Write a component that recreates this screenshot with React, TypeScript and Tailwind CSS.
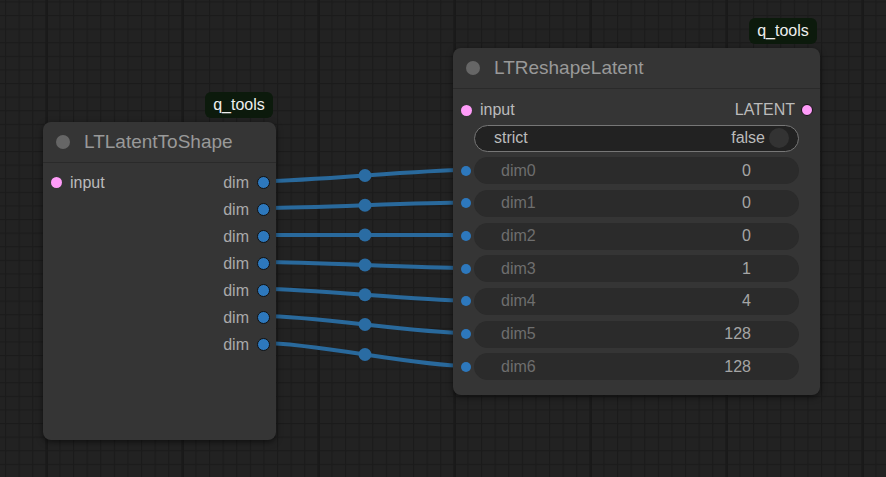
import React from 'react';

const FONT = "font-['Liberation_Sans',Arial,sans-serif]";

// link endpoints: output slot of LTLatentToShape -> input slot of LTReshapeLatent
const links = [
  [181, 170],
  [208, 202.5],
  [235, 235],
  [262, 268],
  [289, 300.5],
  [316, 333],
  [343, 366],
];

const dims = [
  { name: 'dim0', value: '0' },
  { name: 'dim1', value: '0' },
  { name: 'dim2', value: '0' },
  { name: 'dim3', value: '1' },
  { name: 'dim4', value: '4' },
  { name: 'dim5', value: '128' },
  { name: 'dim6', value: '128' },
];

const Badge: React.FC = () => (
  <div className="absolute bottom-full right-[3px] mb-[4px] h-[26px] w-[68px] rounded-[6px] bg-[#0c1a0c] flex items-center justify-center text-[16px] text-[#eeeeee]">
    q_tools
  </div>
);

const Title: React.FC<{ text: string }> = ({ text }) => (
  <div className="h-[41px] flex items-center border-b border-[#2a2a2a]">
    <span className="ml-[13px] w-[14px] h-[14px] rounded-full bg-[#666666]" />
    <span className="ml-[14px] pt-[1px] text-[19px] text-[#999999]">{text}</span>
  </div>
);

const GridAndLinks: React.FC = () => (
  <svg className="absolute inset-0" width={886} height={477}>
    <defs>
      <pattern id="minor" width="13.6" height="13.6" patternUnits="userSpaceOnUse" x="5" y="1.4">
        <rect width="13.6" height="13.6" fill="#222222" />
        <path d="M0 0.5H13.6M0.5 0V13.6" stroke="#1b1b1b" strokeWidth="1.4" />
      </pattern>
    </defs>
    <rect width="886" height="477" fill="#222222" />
    <rect width="886" height="477" fill="url(#minor)" />
    <path d="M46.7 0V477M182.7 0V477M318.7 0V477M454.7 0V477M590.7 0V477M726.7 0V477M862.7 0V477" stroke="#1a1a1a" strokeWidth="2.5" />
    {links.map(([y1, y2], i) => {
      const x1 = 264;
      const x2 = 466;
      const d = `M${x1} ${y1} C${x1 + 50} ${y1} ${x2 - 50} ${y2} ${x2} ${y2}`;
      return (
        <g key={i}>
          <path d={d} fill="none" stroke="#29699c" strokeWidth="4" />
          <circle cx={365} cy={(y1 + y2) / 2} r={6.5} fill="#2a6ca3" />
        </g>
      );
    })}
  </svg>
);

const LatentToShape: React.FC = () => (
  <div className="absolute left-[43px] top-[122px] w-[233px] h-[318px] rounded-[8px] bg-[#353535] shadow-[0_2px_6px_rgba(0,0,0,0.55)]">
    <Badge />
    <Title text="LTLatentToShape" />
    <div className="flex justify-between pt-[6px]">
      <div className="flex flex-col">
        <div className="h-[27px] flex items-center">
          <span className="ml-[8px] w-[11px] h-[11px] rounded-full bg-[#ff9cf9]" />
          <span className="ml-[8px] text-[16px] text-[#bbbbbb]">input</span>
        </div>
      </div>
      <div className="flex flex-col">
        {links.map((_, i) => (
          <div key={i} className="h-[27px] flex items-center justify-end">
            <span className="text-[16px] text-[#aaaaaa]">dim</span>
            <span className="ml-[8px] mr-[6px] w-[13px] h-[13px] rounded-full bg-[#2d78bd] border-[1.5px] border-[#111111]" />
          </div>
        ))}
      </div>
    </div>
  </div>
);

const ReshapeLatent: React.FC = () => (
  <div className="absolute left-[453px] top-[48px] w-[367px] h-[347px] rounded-[8px] bg-[#353535] shadow-[0_2px_6px_rgba(0,0,0,0.55)]">
    <Badge />
    <Title text="LTReshapeLatent" />
    <div className="pt-[8px] h-[34px] flex items-center justify-between">
      <div className="flex items-center">
        <span className="ml-[8px] w-[11px] h-[11px] rounded-full bg-[#ff9cf9]" />
        <span className="ml-[8px] text-[16px] text-[#bbbbbb]">input</span>
      </div>
      <div className="flex items-center">
        <span className="text-[16px] text-[#bbbbbb]">LATENT</span>
        <span className="ml-[6px] mr-[7px] w-[12px] h-[12px] rounded-full bg-[#ff9cf9] border-[1.5px] border-[#111111]" />
      </div>
    </div>
    <div className="flex flex-col gap-[5.7px] mt-[1.5px]">
      <div className="mx-[21px] h-[27px] rounded-full bg-[#222222] border border-[#777777] flex items-center justify-between">
        <span className="ml-[19px] text-[16px] text-[#bbbbbb]">strict</span>
        <div className="flex items-center">
          <span className="text-[16px] text-[#bbbbbb]">false</span>
          <span className="ml-[4px] mr-[9px] w-[20px] h-[20px] rounded-full bg-[#333333]" />
        </div>
      </div>
      {dims.map((d) => (
        <div key={d.name} className="relative mx-[21px] h-[27px] rounded-full bg-[#2b2b2b] flex items-center justify-between">
          <span className="absolute left-[-13px] w-[10px] h-[10px] rounded-full bg-[#2d78bd]" />
          <span className="ml-[27px] text-[16px] text-[#6e6e6e]">{d.name}</span>
          <span className="mr-[48px] text-[16px] text-[#a5a5a5]">{d.value}</span>
        </div>
      ))}
    </div>
  </div>
);

const App: React.FC = () => (
  <div className={`relative w-[886px] h-[477px] overflow-hidden bg-[#222222] ${FONT}`}>
    <GridAndLinks />
    <LatentToShape />
    <ReshapeLatent />
  </div>
);

export default App;
